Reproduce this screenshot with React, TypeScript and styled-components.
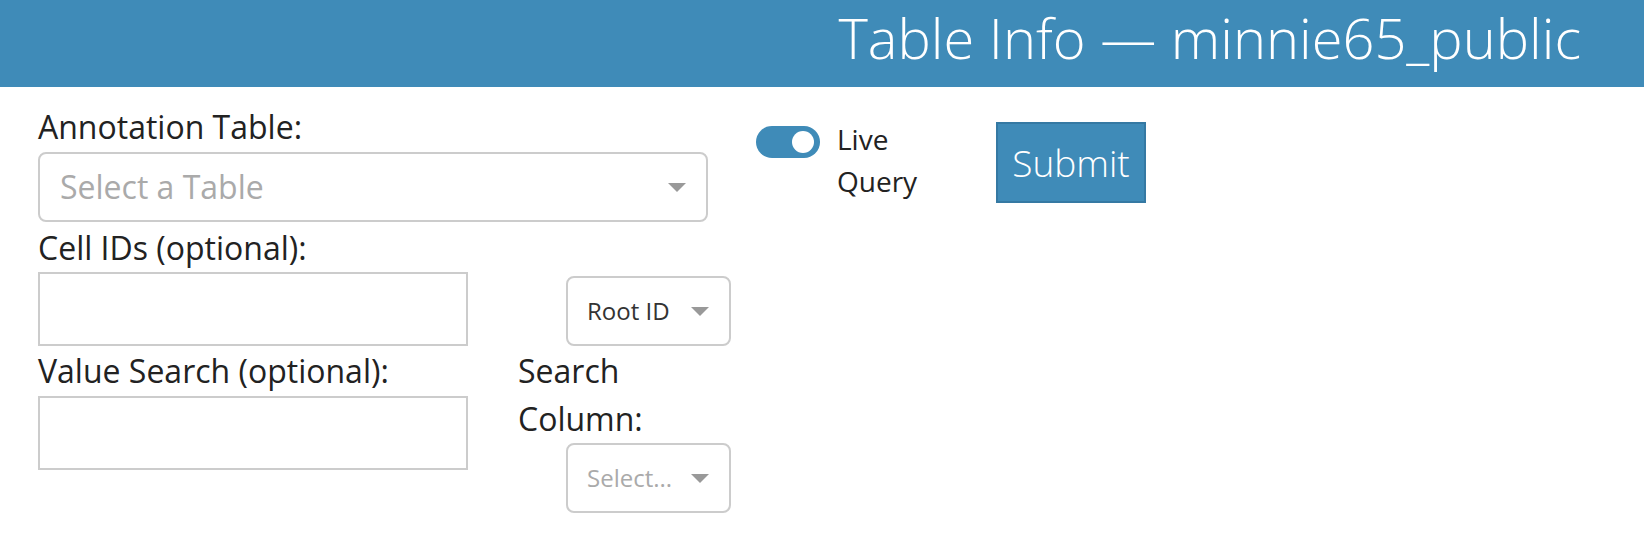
import React from "react";
import styled, { createGlobalStyle } from "styled-components";

const GlobalStyle = createGlobalStyle`
  html, body {
    margin: 0;
    padding: 0;
    background: #ffffff;
    font-family: "Open Sans", "DejaVu Sans", sans-serif;
  }
  * { box-sizing: border-box; }
`;

const Header = styled.header`
  height: 87px;
  background: #3f8bb8;
  display: flex;
  justify-content: flex-end;
  align-items: flex-start;
  padding: 4px 63px 0 0;
`;

const Title = styled.h1`
  margin: 0;
  font-size: 56px;
  font-weight: 300;
  line-height: 67px;
  color: #ffffff;
  white-space: nowrap;
`;

const Main = styled.main`
  display: flex;
  align-items: flex-start;
  padding: 16px 0 0 38px;
`;

const LeftColumn = styled.div`
  width: 670px;
  display: flex;
  flex-direction: column;
`;

const Field = styled.div`
  display: flex;
  flex-direction: column;
  gap: 1px;
`;

const Label = styled.label<{ $narrow?: boolean }>`
  display: block;
  font-size: 32px;
  line-height: 48px;
  color: #222222;
  width: ${(p) => (p.$narrow ? "213px" : "auto")};
`;

const SelectBox = styled.div<{ $width?: string; $small?: boolean; $indent?: boolean }>`
  width: ${(p) => p.$width || "100%"};
  height: 70px;
  border: 2px solid #cccccc;
  border-radius: 8px;
  display: flex;
  align-items: center;
  justify-content: space-between;
  padding: 0 20px 0 ${(p) => (p.$small ? "19px" : "20px")};
  margin-left: ${(p) => (p.$indent ? "48px" : "0")};
  background: #ffffff;
`;

const SelectText = styled.span<{ $placeholder?: boolean; $small?: boolean }>`
  font-size: ${(p) => (p.$small ? "24px" : "32px")};
  color: ${(p) => (p.$placeholder ? "#aaaaaa" : "#333333")};
  white-space: nowrap;
  line-height: 1;
`;

const Arrow = styled.span`
  width: 0;
  height: 0;
  border-left: 9px solid transparent;
  border-right: 9px solid transparent;
  border-top: 9px solid #999999;
  flex-shrink: 0;
`;

const Grid = styled.div`
  display: grid;
  grid-template-columns: 430px 213px;
  column-gap: 50px;
  row-gap: 1px;
  margin-top: 2px;
`;

const TextInput = styled.input<{ $offset?: boolean }>`
  width: 430px;
  height: 74px;
  margin-top: ${(p) => (p.$offset ? "1px" : "0")};
  border: 2px solid #cccccc;
  border-radius: 0;
  padding: 0 16px;
  font-family: inherit;
  font-size: 28px;
  outline: none;
`;

const BottomCell = styled.div`
  display: flex;
  align-items: flex-end;
`;

const StackCell = styled.div`
  display: flex;
  flex-direction: column;
`;

const ToggleGroup = styled.div`
  width: 240px;
  margin-left: 48px;
  margin-top: 15px;
  display: flex;
  align-items: flex-start;
  gap: 17px;
`;

const Track = styled.span<{ $on: boolean }>`
  width: 64px;
  height: 32px;
  margin-top: 8px;
  border-radius: 16px;
  background: ${(p) => (p.$on ? "#3f8bb8" : "#cccccc")};
  display: flex;
  align-items: center;
  justify-content: ${(p) => (p.$on ? "flex-end" : "flex-start")};
  padding: 0 6px;
  flex-shrink: 0;
`;

const Knob = styled.span`
  width: 22px;
  height: 22px;
  border-radius: 50%;
  background: #ffffff;
`;

const ToggleLabel = styled.span`
  width: 90px;
  font-size: 28px;
  line-height: 42px;
  color: #222222;
`;

const SubmitButton = styled.button`
  margin-top: 19px;
  width: 150px;
  height: 81px;
  background: #3f8bb8;
  border: 2px solid #3579a3;
  border-radius: 0;
  color: #ffffff;
  font-family: "Open Sans", sans-serif;
  font-size: 37px;
  font-weight: 300;
  padding: 0;
  cursor: pointer;
`;

export default function App() {
  return (
    <>
      <GlobalStyle />
      <Header>
        <Title>Table Info — minnie65_public</Title>
      </Header>
      <Main>
        <LeftColumn>
          <Field>
            <Label>Annotation Table:</Label>
            <SelectBox>
              <SelectText $placeholder>Select a Table</SelectText>
              <Arrow />
            </SelectBox>
          </Field>
          <Grid>
            <StackCell>
              <Label>Cell IDs (optional):</Label>
              <TextInput type="text" />
            </StackCell>
            <BottomCell>
              <SelectBox $width="165px" $small $indent>
                <SelectText $small>Root ID</SelectText>
                <Arrow />
              </SelectBox>
            </BottomCell>
            <StackCell>
              <Label>Value Search (optional):</Label>
              <TextInput type="text" $offset />
            </StackCell>
            <StackCell>
              <Label $narrow>Search Column:</Label>
              <SelectBox $width="165px" $small $indent>
                <SelectText $small $placeholder>Select...</SelectText>
                <Arrow />
              </SelectBox>
            </StackCell>
          </Grid>
        </LeftColumn>
        <ToggleGroup>
          <Track $on>
            <Knob />
          </Track>
          <ToggleLabel>Live Query</ToggleLabel>
        </ToggleGroup>
        <SubmitButton>Submit</SubmitButton>
      </Main>
    </>
  );
}
